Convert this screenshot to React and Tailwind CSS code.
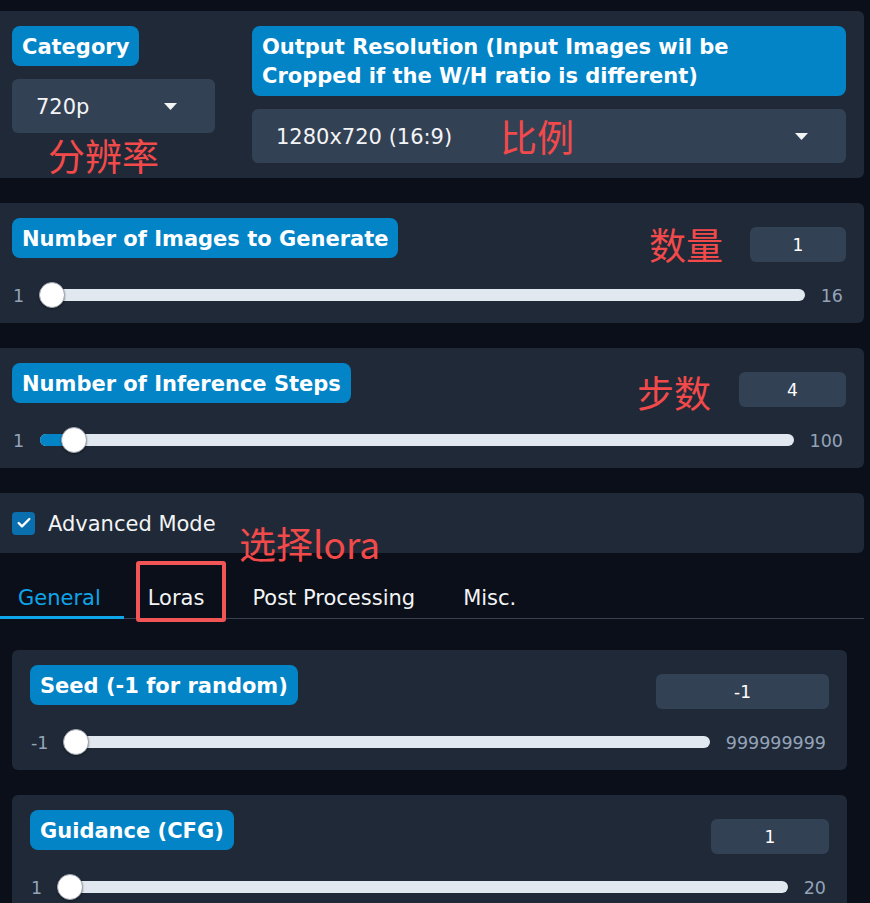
import { Check } from 'lucide-react'

const font = { fontFamily: '"DejaVu Sans", Verdana, sans-serif' }

function Label({ children, className = '' }) {
  return (
    <div className={`inline-block rounded-[8px] bg-[#0284c7] px-[10px] pb-[5px] pt-[7px] text-[21px] font-bold leading-[28px] text-white ${className}`}>
      {children}
    </div>
  )
}

function Caret() {
  return (
    <svg width="13" height="7" viewBox="0 0 13 7" className="shrink-0">
      <path d="M0 0 L13 0 L6.5 7 Z" fill="#f3f4f6" />
    </svg>
  )
}

function Dropdown({ value, className = '' }) {
  return (
    <div className={`flex h-[54px] items-center justify-between rounded-[6px] bg-[#334155] pl-[24px] pr-[38px] text-[21px] text-[#f3f4f6] ${className}`}>
      <span className="pt-[4px]">{value}</span>
      <Caret />
    </div>
  )
}

function Slider({ min, max, value }) {
  const pct = (value - min) / (max - min)
  return (
    <div className="mt-[20px] flex h-[26px] items-center gap-[16px] text-[17.5px] leading-[24px] text-[#94a3b8]">
      <span className="pl-[1px] pt-[1px]">{min}</span>
      <div className="relative h-[12px] flex-1 rounded-full bg-[#e2e8f0]">
        <div
          className="absolute left-0 top-0 h-full rounded-full bg-[#0284c7]"
          style={{ width: `calc(${pct} * (100% - 26px) + 13px)`, display: pct > 0 ? 'block' : 'none' }}
        />
        <div
          className="absolute top-1/2 h-[26px] w-[26px] -translate-y-1/2 rounded-full border border-[#9ca3af] bg-white shadow-[0_1px_2px_rgba(0,0,0,0.4)]"
          style={{ left: `calc(${pct} * (100% - 26px) - 1px)` }}
        />
      </div>
      <span className="pr-[3px] pt-[1px]">{max}</span>
    </div>
  )
}

function SliderBlock({ label, min, max, value, inputW, className = '' }) {
  return (
    <div className={`rounded-[6px] bg-[#1f2937] px-[18px] pb-[15px] pt-[15px] ${className}`}>
      <div className="flex items-start justify-between">
        <Label>{label}</Label>
        <div
          className="mt-[9px] flex h-[35px] items-center justify-center rounded-[6px] bg-[#334155] pt-[2px] text-[17px] text-white"
          style={{ width: inputW }}
        >
          {value}
        </div>
      </div>
      <Slider min={min} max={max} value={value} />
    </div>
  )
}

const note = 'absolute whitespace-nowrap text-[37px] leading-none text-[#f24a4a]'
const cjk = { fontFamily: '"Noto Sans CJK SC", "DejaVu Sans", sans-serif' }

export default function App() {
  return (
    <div className="relative h-[903px] w-[870px] overflow-hidden bg-[#0b0f19]" style={font}>
      <div className="-ml-[6px] w-[870px] pt-[11px]">
        {/* resolution */}
        <div className="flex gap-[37px] rounded-[6px] bg-[#1f2937] px-[18px] py-[15px]">
          <div className="flex w-[203px] flex-col items-start gap-[13px]">
            <Label>Category</Label>
            <Dropdown value="720p" className="w-full" />
          </div>
          <div className="flex flex-1 flex-col gap-[13px]">
            <Label className="!leading-[29px]">
              Output Resolution (Input Images wil be<br />Cropped if the W/H ratio is different)
            </Label>
            <Dropdown value="1280x720 (16:9)" />
          </div>
        </div>

        <SliderBlock className="mt-[25px]" label="Number of Images to Generate" min={1} max={16} value={1} inputW={96} />
        <SliderBlock className="mt-[25px]" label="Number of Inference Steps" min={1} max={100} value={4} inputW={107} />

        {/* advanced */}
        <div className="mt-[25px] flex h-[60px] items-center gap-[13px] rounded-[6px] bg-[#1f2937] px-[18px]">
          <div className="flex h-[23px] w-[23px] items-center justify-center rounded-[4px] bg-[#0a6fae]">
            <Check size={16} strokeWidth={3.5} color="white" />
          </div>
          <span className="pt-[3px] text-[21px] text-[#f3f4f6]">Advanced Mode</span>
        </div>

        {/* tabs */}
        <div className="mt-[22px] flex border-b border-[#374151] text-[21px]">
          <div className="relative flex h-[43px] items-center pl-[24px] pr-[23px] pt-[5px] text-[#0ea5e9]">
            General
            <div className="absolute -bottom-px left-[6px] right-0 h-[3px] bg-[#0ea5e9]" />
          </div>
          {['Loras', 'Post Processing', 'Misc.'].map(t => (
            <div key={t} className="flex h-[43px] items-center px-[24px] pt-[5px] text-[#f3f4f6]">
              {t}
            </div>
          ))}
        </div>

        <div className="ml-[18px] mr-[17px] mt-[31px] flex flex-col gap-[25px]">
          <SliderBlock label="Seed (-1 for random)" min={-1} max={999999999} value={-1} inputW={173} />
          <SliderBlock label="Guidance (CFG)" min={1} max={20} value={1} inputW={118} />
        </div>
      </div>

      {/* annotations */}
      <span className={note} style={{ ...cjk, left: 48, top: 137 }}>分辨率</span>
      <span className={note} style={{ ...cjk, left: 500, top: 118 }}>比例</span>
      <span className={note} style={{ ...cjk, left: 649, top: 226 }}>数量</span>
      <span className={note} style={{ ...cjk, left: 637, top: 374 }}>步数</span>
      <span className={note} style={{ ...cjk, left: 239, top: 525 }}>选择lora</span>
      <div className="absolute left-[136px] top-[561px] h-[61px] w-[90px] rounded-[3px] border-4 border-[#f25555]" />
    </div>
  )
}
